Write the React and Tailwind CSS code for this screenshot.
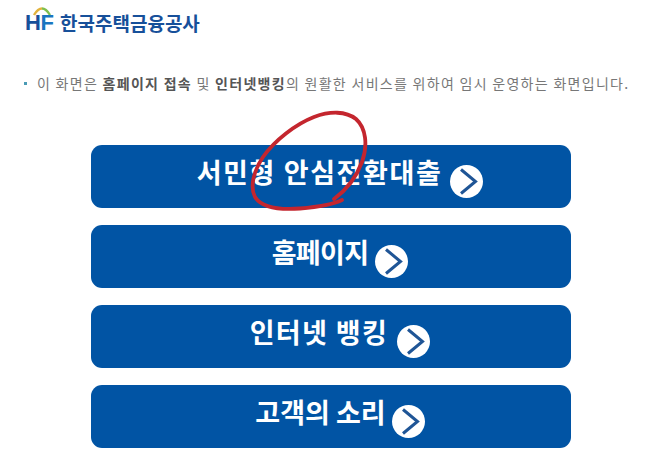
import React from 'react';

const FONT = "font-['Noto_Sans_CJK_KR','Noto_Sans',sans-serif]";

function ArrowCircle() {
  return (
    <svg width="33" height="33" viewBox="0 0 33 33" className="shrink-0" aria-hidden="true">
      <circle cx="16.5" cy="16.5" r="16.500" fill="#fff" />
      <path d="M11 4.500 L25.500 16.500 L11 28.500" fill="none" stroke="#1f5596" strokeWidth="3" strokeLinejoin="miter" />
    </svg>
  );
}

function BigButton({ label, gap, tracking }) {
  return (
    <div className="h-[63px] w-[480px] rounded-[11px] bg-[#0154a4] flex items-center justify-center pl-[18px]">
      <span className={`flex items-center ${gap}`}>
        <span className={`${FONT} ${tracking} text-[27px] leading-none font-bold text-white -mt-[10px] whitespace-pre`}>{label}</span>
        <span className="mt-[10px]"><ArrowCircle /></span>
      </span>
    </div>
  );
}

export default function App() {
  return (
    <div className="relative h-[468px] w-[655px] overflow-hidden bg-white">
      <div className="flex items-center pl-[25px] pt-[9px] h-[38px] gap-[8px]">
        <div className="relative w-[27px] h-[27px]">
          <svg width="20" height="9" viewBox="0 0 20 9" className="absolute left-[7px] -top-[3px]" aria-hidden="true">
            <path d="M2 8 C5 3 7 1.500 10 1.500" fill="none" stroke="#e2b33c" strokeWidth="2.400" />
            <path d="M10 1.500 C13 1.500 15 3 18 8" fill="none" stroke="#7fbf4d" strokeWidth="2.400" />
          </svg>
          <span className="absolute left-0 bottom-[4px] font-['Liberation_Sans',sans-serif] text-[22px] leading-[20px] font-bold text-[#17509a] tracking-[-0.5px]">H<span className="text-[#1a76c0]">F</span></span>
        </div>
        <span className={`${FONT} text-[19px] leading-none font-bold text-[#17509a] -mt-[2px]`}>한국주택금융공사</span>
      </div>

      <p className={`${FONT} mt-[35px] pl-[24px] flex items-center text-[14px] leading-[20px] text-[#777] whitespace-nowrap tracking-[1.29px]`}>
        <span className="w-[3px] h-[3px] bg-[#4a9bb5] mr-[10px]"></span>
        <span>이 화면은 <b className="font-bold text-[#555]">홈페이지 접속</b> 및 <b className="font-bold text-[#555]">인터넷뱅킹</b>의 원활한 서비스를 위하여 임시 운영하는 화면입니다.</span>
      </p>

      <div className="mt-[52px] ml-[91px] flex flex-col gap-[17px]">
        <BigButton label="서민형 안심전환대출" gap="gap-[8px]" tracking="tracking-[1.6px]" />
        <BigButton label="홈페이지" gap="gap-[7px]" tracking="tracking-[-0.7px]" />
        <BigButton label="인터넷 뱅킹" gap="gap-[9px]" tracking="tracking-[1.4px]" />
        <BigButton label="고객의 소리" gap="gap-[6px]" tracking="" />
      </div>

      <svg width="655" height="468" viewBox="0 0 655 468" className="absolute left-0 top-0 pointer-events-none" aria-hidden="true">
        <path
          d="M342 200 C332 205 318 207 300 208.500 C280 210 262 208 255 197 C250 187 253 172 263 157 C275 140 296 124 314 117 C330 111 346 111 356 119 C366 128 368 145 362 162 C356 178 345 191 334 199"
          fill="none"
          stroke="#c4262e"
          strokeWidth="3.800"
          strokeLinecap="round"
        />
      </svg>
    </div>
  );
}
